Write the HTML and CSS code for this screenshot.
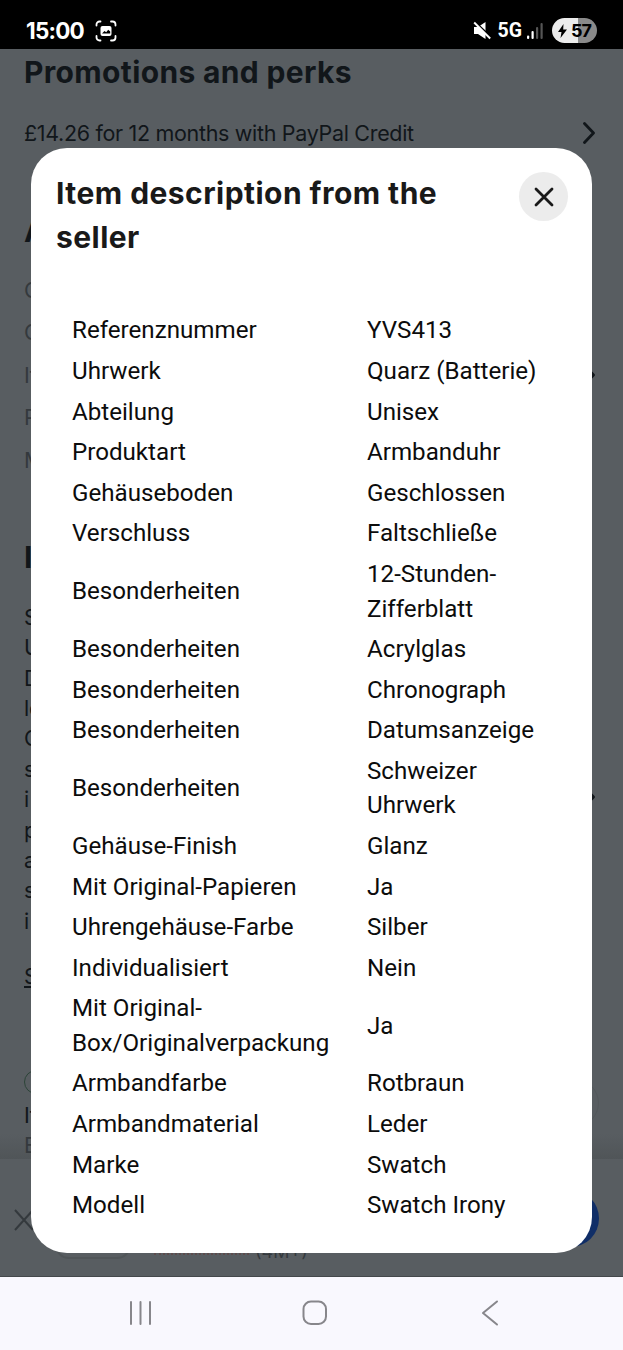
FILE: index.html
```html
<!DOCTYPE html>
<html lang="en">

<head>
    <meta charset="UTF-8">
    <meta name="viewport" content="width=device-width, initial-scale=1.0">
    <title>Item description</title>
    <link rel="stylesheet" href="styles.css">
</head>

<body>
    <div class="screen">
        <header class="status_bar">
            <span class="time">15:00</span>
            <svg class="capture" width="22" height="22" viewBox="0 0 22 22" fill="none" stroke="#fff" stroke-width="1.8" stroke-linecap="round">
                <path d="M1.500 5.500V4.500A3 3 0 0 1 4.500 1.500H5.500M16 1.500h1.500a3 3 0 0 1 3 3V5.500M20.500 16v1.500a3 3 0 0 1-3 3H16M5.500 20.500H4.500a3 3 0 0 1-3-3V16" />
                <rect x="5.500" y="6" width="11" height="10" rx="2" fill="#fff" stroke="none" />
                <path d="M7 13.500l2.500-2.500 1.700 1.300 2-2.500 2 1.800v2z" fill="#000" stroke="none" />
            </svg>
            <div class="status_right">
                <svg class="mute" width="18" height="19" viewBox="0 0 18 19">
                    <path d="M1 6h4l7.500-5v17L5 13H1z" fill="#fff" />
                    <path d="M1 0l17 16" stroke="#000" stroke-width="2" />
                    <path d="M1.200 1.500l16 16" stroke="#fff" stroke-width="1.900" />
                </svg>
                <span class="network">5G</span>
                <svg class="signal" width="17" height="18" viewBox="0 0 17 18">
                    <rect x="0" y="13.500" width="2.200" height="3.500" rx="1" fill="#fff" />
                    <rect x="4.500" y="9" width="2.200" height="8" rx="1" fill="#fff" />
                    <rect x="9" y="5" width="2.200" height="12" rx="1" fill="#555" />
                    <rect x="13.500" y="1" width="2.200" height="16" rx="1" fill="#555" />
                </svg>
                <div class="battery">
                    <svg width="9" height="14" viewBox="0 0 9 14">
                        <path d="M5.500 0L0 8h3.500L2.500 14 9 5.500H5.200z" fill="#000" />
                    </svg>
                    <span>57</span>
                </div>
            </div>
        </header>

        <main class="page">
            <h2>Promotions and perks</h2>
            <div class="promo">
                <span>£14.26 for 12 months with PayPal Credit</span>
                <svg width="12" height="22" viewBox="0 0 12 22"><path d="M1.500 1.500L10.500 11l-9 9.500" /></svg>
            </div>

            <h2 class="about">A</h2>
            <div class="group specs">
                <ul>
                    <li>C</li>
                    <li>C</li>
                    <li>It</li>
                    <li>P</li>
                    <li>M</li>
                </ul>
                <svg width="12" height="22" viewBox="0 0 12 22"><path d="M1.500 1.500L10.500 11l-9 9.500" /></svg>
            </div>

            <h2 class="desc_title">I</h2>
            <div class="group desc">
                <div>
                    <ul>
                        <li>S</li>
                        <li>U</li>
                        <li>D</li>
                        <li>lo</li>
                        <li>C</li>
                        <li>s</li>
                        <li>i</li>
                        <li>p</li>
                        <li>a</li>
                        <li>s</li>
                        <li>i</li>
                    </ul>
                    <a class="more">S</a>
                </div>
                <svg width="12" height="22" viewBox="0 0 12 22"><path d="M1.500 1.500L10.500 11l-9 9.500" /></svg>
            </div>

            <div class="feedback">
                <div>
                    <div class="pill"></div>
                    <p>It</p>
                    <p class="light">B</p>
                </div>
                <div class="round"></div>
            </div>
        </main>

        <footer class="banner">
            <svg class="dismiss" width="20" height="22" viewBox="0 0 20 22"><path d="M1 1l18 20M19 1L1 21" /></svg>
            <div class="app_icon"></div>
            <div class="rating">
                <span class="stars"></span>
                <span>(4M+)</span>
            </div>
            <div class="open_btn"></div>
        </footer>

        <nav class="nav_bar">
            <svg width="24" height="26" viewBox="0 0 24 26"><path d="M2 2v22M11.500 2v22M21 2v22" /></svg>
            <svg width="26" height="26" viewBox="0 0 26 26"><rect x="1.500" y="1.500" width="22.500" height="22.500" rx="7.500" /></svg>
            <svg width="18" height="26" viewBox="0 0 18 26"><path d="M16 1.500L2 13l14 11.500" /></svg>
        </nav>

        <section class="modal">
            <div class="modal_head">
                <h1>Item description from the<br>seller</h1>
                <button class="close" aria-label="Close">
                    <svg width="20" height="20" viewBox="0 0 20 20"><path d="M2 2l16 16M18 2L2 18" /></svg>
                </button>
            </div>
            <table>
                <tr><td>Referenznummer</td><td>YVS413</td></tr>
                <tr><td>Uhrwerk</td><td>Quarz (Batterie)</td></tr>
                <tr><td>Abteilung</td><td>Unisex</td></tr>
                <tr><td>Produktart</td><td>Armbanduhr</td></tr>
                <tr><td>Gehäuseboden</td><td>Geschlossen</td></tr>
                <tr><td>Verschluss</td><td>Faltschließe</td></tr>
                <tr><td>Besonderheiten</td><td>12-Stunden-<br>Zifferblatt</td></tr>
                <tr><td>Besonderheiten</td><td>Acrylglas</td></tr>
                <tr><td>Besonderheiten</td><td>Chronograph</td></tr>
                <tr><td>Besonderheiten</td><td>Datumsanzeige</td></tr>
                <tr><td>Besonderheiten</td><td>Schweizer<br>Uhrwerk</td></tr>
                <tr><td>Gehäuse-Finish</td><td>Glanz</td></tr>
                <tr><td>Mit Original-Papieren</td><td>Ja</td></tr>
                <tr><td>Uhrengehäuse-Farbe</td><td>Silber</td></tr>
                <tr><td>Individualisiert</td><td>Nein</td></tr>
                <tr><td>Mit Original-<br>Box/Originalverpackung</td><td>Ja</td></tr>
                <tr><td>Armbandfarbe</td><td>Rotbraun</td></tr>
                <tr><td>Armbandmaterial</td><td>Leder</td></tr>
                <tr><td>Marke</td><td>Swatch</td></tr>
                <tr><td>Modell</td><td>Swatch Irony</td></tr>
            </table>
        </section>
    </div>
</body>

</html>
```
FILE: styles.css
```css
* {
    margin: 0;
    padding: 0;
    box-sizing: border-box;
}

body {
    font-family: Inter, "Liberation Sans", sans-serif;
    background-color: #000;
}

.screen {
    position: relative;
    width: 623px;
    height: 1350px;
    overflow: hidden;
    display: flex;
    flex-direction: column;
}

/* Status bar */
.status_bar {
    height: 49px;
    flex: none;
    background-color: #000;
    color: #fff;
    display: flex;
    align-items: center;
    padding: 12px 26px 0 26px;
}

.time {
    font-size: 22.5px;
    font-weight: 700;
    letter-spacing: -0.8px;
}

.capture {
    margin-left: 11px;
}

.status_right {
    display: flex;
    align-items: center;
    margin-left: auto;
}

.network {
    font-family: Roboto, sans-serif;
    font-size: 19.5px;
    font-weight: 700;
    margin-left: 7px;
}

.signal {
    margin-left: 5px;
}

.battery {
    display: flex;
    align-items: center;
    justify-content: center;
    gap: 4px;
    width: 45px;
    height: 25px;
    margin-left: 8px;
    border-radius: 13px;
    background: linear-gradient(90deg, #ececec 57%, #8a8a8a 57%);
    color: #000;
    font-size: 18px;
    font-weight: 700;
    letter-spacing: -0.9px;
}

/* Dimmed listing page */
.page {
    height: 1110px;
    flex: none;
    overflow: hidden;
    background: linear-gradient(#585d61 1085px, #505558 1110px);
    color: #11161a;
    padding: 0 28px 0 24px;
}

h2 {
    font-size: 30px;
    line-height: 46px;
    font-weight: 700;
    letter-spacing: 0.35px;
}

.page svg {
    flex: none;
    fill: none;
    stroke: #11161a;
    stroke-width: 2.8;
    stroke-linecap: round;
    stroke-linejoin: round;
}

.promo {
    display: flex;
    align-items: center;
    justify-content: space-between;
    height: 48px;
    margin-top: 14px;
    font-size: 21.5px;
    letter-spacing: -0.32px;
}

.about {
    margin-top: 51px;
}

.group {
    display: flex;
    align-items: center;
    justify-content: space-between;
    font-size: 21.5px;
    letter-spacing: -0.32px;
}

.group ul {
    list-style: none;
}

.specs {
    margin-top: 14.75px;
    color: #34393d;
}

.specs li {
    line-height: 42.5px;
}

.desc_title {
    margin-top: 52.75px;
}

.desc {
    margin-top: 21.8px;
}

.desc li {
    line-height: 30.4px;
}

.more {
    display: block;
    margin-top: 25px;
    line-height: 30px;
    text-decoration: underline;
}

.feedback {
    display: flex;
    justify-content: space-between;
    align-items: center;
    margin-top: 79px;
    margin-right: -4px;
    font-size: 21.5px;
    line-height: 30px;
    letter-spacing: -0.32px;
}

.pill {
    width: 60px;
    height: 24px;
    margin-bottom: 6px;
    border: 1px solid #2c4438;
    border-radius: 12px;
}

.light {
    color: #34393d;
}

.round {
    width: 48px;
    height: 48px;
    margin-top: -24px;
    border: 1px solid #53585b;
    border-radius: 50%;
}

/* App banner */
.banner {
    height: 118px;
    flex: none;
    display: flex;
    background-color: #585d61;
    border-bottom: 1px solid #44484b;
    padding: 0 24px 0 14px;
}

.dismiss {
    margin-top: 50px;
    fill: none;
    stroke: #34393d;
    stroke-width: 2;
}

.app_icon {
    width: 76px;
    height: 76px;
    margin: 24px 0 0 21px;
    border: 2px solid #505558;
    border-radius: 14px;
}

.rating {
    display: flex;
    gap: 6px;
    margin: 81px 0 0 23px;
    font-size: 18px;
    line-height: 24px;
    color: #34393d;
}

.stars {
    width: 95px;
    height: 15px;
    border-bottom: 2px dotted #5d4c4d;
}

.open_btn {
    width: 110px;
    height: 57px;
    margin: 31px 0 0 auto;
    border-radius: 29px;
    background-color: #102e67;
}

/* System navigation */
.nav_bar {
    flex: 1;
    display: flex;
    justify-content: space-between;
    align-items: center;
    background-color: #f9f8fe;
    padding: 0 124px 1px 129px;
}

.nav_bar svg {
    fill: none;
    stroke: #87868b;
    stroke-width: 2;
    stroke-linecap: round;
    stroke-linejoin: round;
}

.nav_bar svg:nth-child(2) {
    margin-right: 5px;
}

/* Modal */
.modal {
    position: absolute;
    top: 148px;
    left: 31px;
    width: 561px;
    height: 1105px;
    padding: 24px 24px 0 25px;
    border-radius: 36px;
    background-color: #fff;
}

.modal_head {
    display: flex;
    justify-content: space-between;
    align-items: flex-start;
    height: 138.4px;
}

h1 {
    font-size: 30px;
    line-height: 43.5px;
    font-weight: 700;
    letter-spacing: 0.45px;
    color: #191919;
    white-space: nowrap;
}

.close {
    width: 49px;
    height: 49px;
    display: flex;
    justify-content: center;
    align-items: center;
    border: none;
    border-radius: 50%;
    background-color: #ececec;
}

.close svg {
    fill: none;
    stroke: #191919;
    stroke-width: 2.8;
    stroke-linecap: round;
}

table {
    width: 512px;
    table-layout: fixed;
    border-collapse: collapse;
    font-family: Roboto, sans-serif;
    font-size: 24.15px;
    line-height: 34.5px;
    color: #0c0c0c;
}

td {
    padding: 3.05px 0 3.05px 16px;
    vertical-align: middle;
}

td:first-child {
    width: 295px;
}
```
